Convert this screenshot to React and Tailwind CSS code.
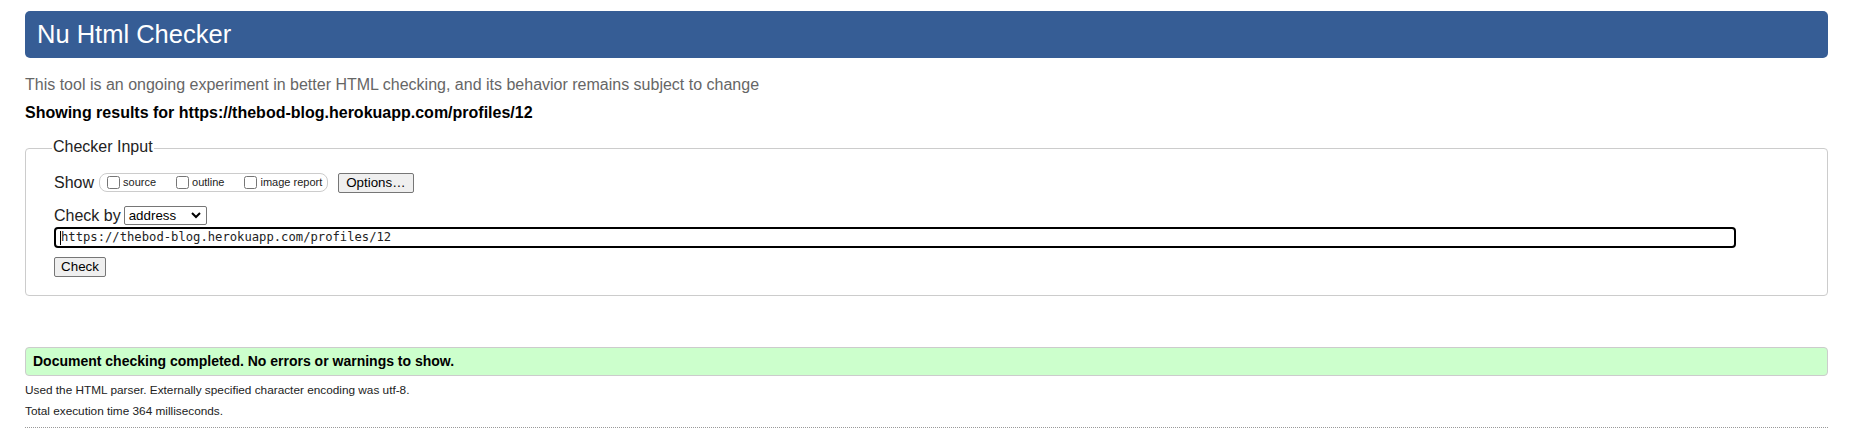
export default function App() {
  return (
    <div className="min-h-screen bg-white pl-[25px] pr-[24px] pt-[11px] font-['Liberation_Sans',Arial,sans-serif] text-[#222]">
      <header className="h-[47px] rounded-[5px] bg-[#365d95] pl-[12px] text-[25.5px] leading-[47px] text-white">
        Nu Html Checker
      </header>

      <p className="mt-[18px] text-[16px] leading-[18px] text-[#666]">
        This tool is an ongoing experiment in better HTML checking, and its behavior remains subject to change
      </p>
      <p className="mt-[10px] text-[16px] font-bold leading-[18px] text-black">
        Showing results for https://thebod-blog.herokuapp.com/profiles/12
      </p>

      <fieldset className="mt-[16px] rounded-[4px] border border-[#ccc]">
        <legend className="ml-[26px] px-[1px] pb-[3px] text-[16px] leading-[17px]">Checker Input</legend>
        <div className="pl-[28px] pt-[15px] pb-[17px]">
          {/* show options */}
          <div className="flex h-[20px] items-start">
            <span className="text-[16px] leading-[20px]">Show</span>
            <div className="ml-[5px] flex h-[19px] items-center rounded-[8px] border border-[#ccc] pl-[3px] pr-[5px] text-[11px]">
              <label className="flex items-center">
                <input type="checkbox" className="ml-[4px] mr-[3px] h-[13px] w-[13px]" />
                source
              </label>
              <label className="ml-[16px] flex items-center">
                <input type="checkbox" className="ml-[4px] mr-[3px] h-[13px] w-[13px]" />
                outline
              </label>
              <label className="ml-[16px] flex items-center">
                <input type="checkbox" className="ml-[4px] mr-[3px] h-[13px] w-[13px]" />
                image report
              </label>
            </div>
            <button className="ml-[10px] h-[20px] rounded-[2px] border border-[#767676] bg-[#efefef] px-[7px] text-[13.33px] leading-[18px] text-black">
              Options…
            </button>
          </div>

          <div className="mt-[13px] flex h-[19px] items-center">
            <span className="text-[16px] leading-[19px]">Check by</span>
            <div className="ml-[3px] flex h-[19px] w-[83px] items-center justify-between rounded-[2px] border border-[#767676] bg-white pl-[4px] pr-[5px] text-[13.33px] text-black">
              <span>address</span>
              <svg width="10" height="7" viewBox="0 0 10 7" fill="none" stroke="#000" strokeWidth="2">
                <path d="M1 1l4 4 4-4" />
              </svg>
            </div>
          </div>

          <div className="mt-[2px] flex h-[21px] w-[1682px] items-center rounded-[4px] border-2 border-black pl-[4px] font-['DejaVu_Sans_Mono','Liberation_Mono',monospace] text-[12.2px] text-[#222]">
            <span className="h-[14px] w-[1px] bg-black" />
            <span>https://thebod-blog.herokuapp.com/profiles/12</span>
          </div>

          <button className="mt-[9px] h-[20px] w-[52px] rounded-[2px] border border-[#767676] bg-[#efefef] text-[13.33px] leading-[18px] text-black">
            Check
          </button>
        </div>
      </fieldset>

      <div className="mt-[51px] h-[29px] rounded-[4px] border border-[#ccc] bg-[#ccffcc] pl-[7px] text-[14px] font-bold leading-[27px] text-black">
        Document checking completed. No errors or warnings to show.
      </div>
      <p className="mt-[7px] text-[11.8px] leading-[15px]">
        Used the HTML parser. Externally specified character encoding was utf-8.
      </p>
      <p className="mt-[6px] text-[11.8px] leading-[15px]">Total execution time 364 milliseconds.</p>
      <div className="mt-[8px] border-t border-dotted border-[#999]" />
    </div>
  );
}
